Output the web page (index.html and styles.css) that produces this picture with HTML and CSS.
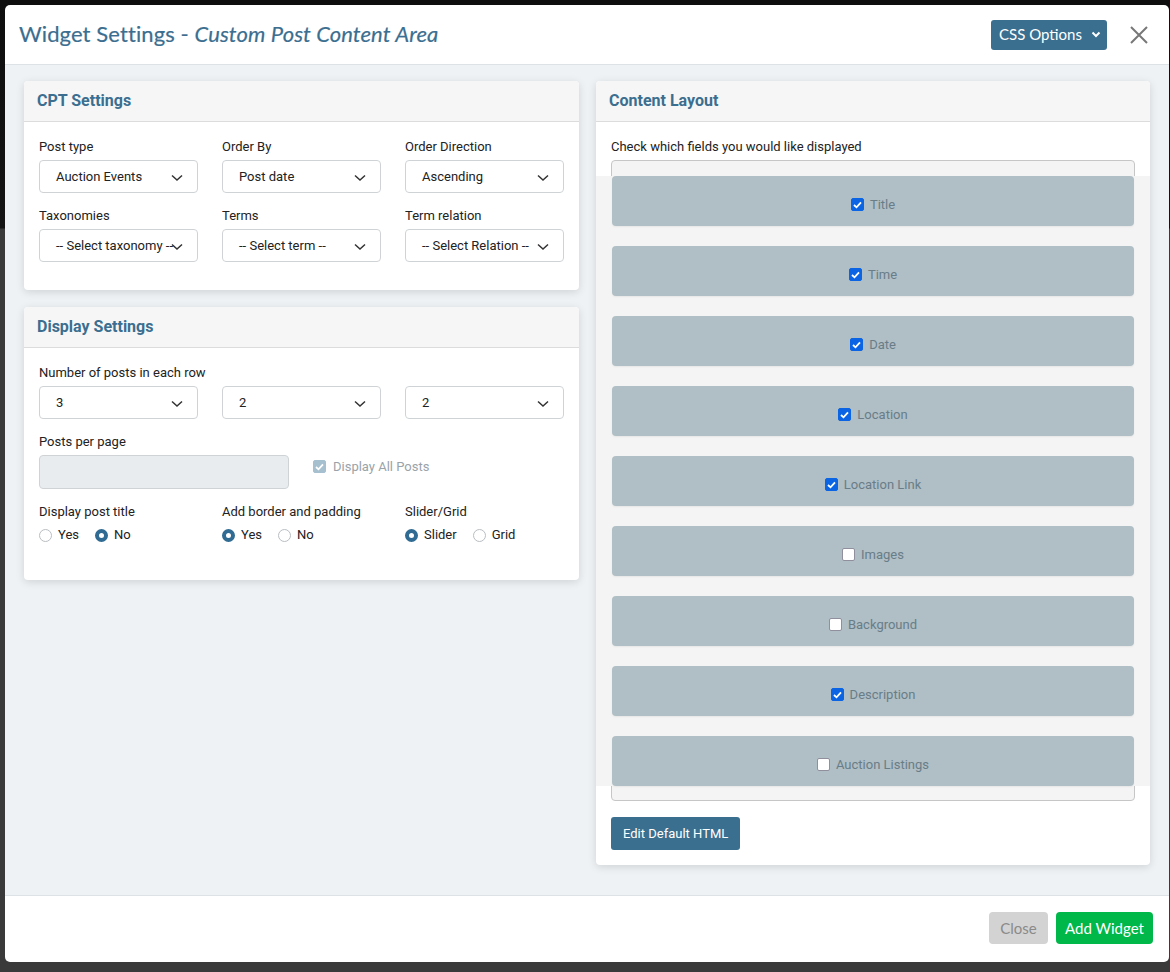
FILE: index.html
```html
<!DOCTYPE html>
<html lang="en">
<head>
<meta charset="utf-8">
<title>Widget Settings</title>
<link rel="stylesheet" href="styles.css">
</head>
<body>
<div class="modal">
  <header class="modal-header">
    <h1 class="modal-title">Widget Settings - <em>Custom Post Content Area</em></h1>
    <div class="header-actions">
      <button class="btn-css">CSS Options
        <svg class="caret" width="10" height="7" viewBox="0 0 10 7"><path d="M1.5 1.5 L5 5 L8.5 1.5" fill="none" stroke="#fff" stroke-width="2"/></svg>
      </button>
      <button class="btn-x" aria-label="Close">
        <svg width="20" height="20" viewBox="0 0 20 20"><path d="M2 2 L18 18 M18 2 L2 18" stroke="#777" stroke-width="2"/></svg>
      </button>
    </div>
  </header>

  <main class="modal-body">
    <div class="col">
      <section class="card">
        <div class="card-head">CPT Settings</div>
        <div class="card-body cpt-body">
          <div class="grid3">
            <div class="field"><label>Post type</label><div class="select"><span>Auction Events</span><svg class="chev" width="12" height="8" viewBox="0 0 12 8"><path d="M1 1.5 L6 6 L11 1.5" fill="none" stroke="#333" stroke-width="1.5"/></svg></div></div>
            <div class="field"><label>Order By</label><div class="select"><span>Post date</span><svg class="chev" width="12" height="8" viewBox="0 0 12 8"><path d="M1 1.5 L6 6 L11 1.5" fill="none" stroke="#333" stroke-width="1.5"/></svg></div></div>
            <div class="field"><label>Order Direction</label><div class="select"><span>Ascending</span><svg class="chev" width="12" height="8" viewBox="0 0 12 8"><path d="M1 1.5 L6 6 L11 1.5" fill="none" stroke="#333" stroke-width="1.5"/></svg></div></div>
            <div class="field"><label>Taxonomies</label><div class="select"><span>-- Select taxonomy --</span><svg class="chev" width="12" height="8" viewBox="0 0 12 8"><path d="M1 1.5 L6 6 L11 1.5" fill="none" stroke="#333" stroke-width="1.5"/></svg></div></div>
            <div class="field"><label>Terms</label><div class="select"><span>-- Select term --</span><svg class="chev" width="12" height="8" viewBox="0 0 12 8"><path d="M1 1.5 L6 6 L11 1.5" fill="none" stroke="#333" stroke-width="1.5"/></svg></div></div>
            <div class="field"><label>Term relation</label><div class="select"><span>-- Select Relation --</span><svg class="chev" width="12" height="8" viewBox="0 0 12 8"><path d="M1 1.5 L6 6 L11 1.5" fill="none" stroke="#333" stroke-width="1.5"/></svg></div></div>
          </div>
        </div>
      </section>

      <section class="card">
        <div class="card-head">Display Settings</div>
        <div class="card-body display-body">
          <div class="field">
            <label>Number of posts in each row</label>
            <div class="grid3">
              <div class="select"><span>3</span><svg class="chev" width="12" height="8" viewBox="0 0 12 8"><path d="M1 1.5 L6 6 L11 1.5" fill="none" stroke="#333" stroke-width="1.5"/></svg></div>
              <div class="select"><span>2</span><svg class="chev" width="12" height="8" viewBox="0 0 12 8"><path d="M1 1.5 L6 6 L11 1.5" fill="none" stroke="#333" stroke-width="1.5"/></svg></div>
              <div class="select"><span>2</span><svg class="chev" width="12" height="8" viewBox="0 0 12 8"><path d="M1 1.5 L6 6 L11 1.5" fill="none" stroke="#333" stroke-width="1.5"/></svg></div>
            </div>
          </div>
          <div class="ppp-row">
            <div class="field ppp-field"><label>Posts per page</label><div class="input disabled"></div></div>
            <div class="all-posts">
              <span class="cbox cbox-disabled"><svg width="9" height="8" viewBox="0 0 9 8"><path d="M1 4 L3.5 6.3 L8 1.3" fill="none" stroke="#fff" stroke-width="1.8"/></svg></span>
              <span>Display All Posts</span>
            </div>
          </div>
          <div class="grid3 radios-row">
            <div class="field"><label>Display post title</label>
              <div class="radios"><span class="radio-opt"><span class="radio"></span>Yes</span><span class="radio-opt"><span class="radio on"></span>No</span></div>
            </div>
            <div class="field"><label>Add border and padding</label>
              <div class="radios"><span class="radio-opt"><span class="radio on"></span>Yes</span><span class="radio-opt"><span class="radio"></span>No</span></div>
            </div>
            <div class="field"><label>Slider/Grid</label>
              <div class="radios"><span class="radio-opt"><span class="radio on"></span>Slider</span><span class="radio-opt"><span class="radio"></span>Grid</span></div>
            </div>
          </div>
        </div>
      </section>
    </div>

    <div class="col">
      <section class="card layout-card">
        <div class="card-head">Content Layout</div>
        <div class="card-body layout-body">
          <label>Check which fields you would like displayed</label>
          <div class="fields-box">
            <ul class="field-list">
              <li class="item"><span class="cbox on"><svg width="9" height="8" viewBox="0 0 9 8"><path d="M1 4 L3.5 6.3 L8 1.3" fill="none" stroke="#fff" stroke-width="1.8"/></svg></span>Title</li>
              <li class="item"><span class="cbox on"><svg width="9" height="8" viewBox="0 0 9 8"><path d="M1 4 L3.5 6.3 L8 1.3" fill="none" stroke="#fff" stroke-width="1.8"/></svg></span>Time</li>
              <li class="item"><span class="cbox on"><svg width="9" height="8" viewBox="0 0 9 8"><path d="M1 4 L3.5 6.3 L8 1.3" fill="none" stroke="#fff" stroke-width="1.8"/></svg></span>Date</li>
              <li class="item"><span class="cbox on"><svg width="9" height="8" viewBox="0 0 9 8"><path d="M1 4 L3.5 6.3 L8 1.3" fill="none" stroke="#fff" stroke-width="1.8"/></svg></span>Location</li>
              <li class="item"><span class="cbox on"><svg width="9" height="8" viewBox="0 0 9 8"><path d="M1 4 L3.5 6.3 L8 1.3" fill="none" stroke="#fff" stroke-width="1.8"/></svg></span>Location Link</li>
              <li class="item"><span class="cbox"></span>Images</li>
              <li class="item"><span class="cbox"></span>Background</li>
              <li class="item"><span class="cbox on"><svg width="9" height="8" viewBox="0 0 9 8"><path d="M1 4 L3.5 6.3 L8 1.3" fill="none" stroke="#fff" stroke-width="1.8"/></svg></span>Description</li>
              <li class="item"><span class="cbox"></span>Auction Listings</li>
            </ul>
          </div>
          <button class="btn-primary">Edit Default HTML</button>
        </div>
      </section>
    </div>
  </main>

  <footer class="modal-footer">
    <button class="btn-close">Close</button>
    <button class="btn-add">Add Widget</button>
  </footer>
</div>
</body>
</html>
```

FILE: styles.css
```css
* { box-sizing: border-box; }
html, body { margin: 0; padding: 0; }
body {
  width: 1170px;
  height: 972px;
  background: linear-gradient(#0e0e0e 0, #141414 228px, #3a3a3a 229px, #3a3a3a 100%);
  font-family: Roboto, "Liberation Sans", sans-serif;
  color: #222;
  overflow: hidden;
}
button { font: inherit; cursor: pointer; }

.modal {
  margin: 5px 0 0 5px;
  width: 1164px;
  height: 957px;
  background: #fff;
  border-radius: 5px;
  display: flex;
  flex-direction: column;
  overflow: hidden;
}

.modal-header {
  height: 60px;
  flex: none;
  border-bottom: 1px solid #dde2e6;
  display: flex;
  align-items: center;
  justify-content: space-between;
  padding: 0 20px 0 14px;
}
.modal-title {
  margin: 0 0 2px;
  font-family: Lato, "Open Sans", sans-serif;
  font-weight: 400;
  font-size: 22px;
  color: #3b6e8f;
  letter-spacing: 0.1px;
  -webkit-text-stroke: 0.2px #3b6e8f;
}
.modal-title em { font-style: italic; }
.header-actions { display: flex; align-items: center; gap: 22px; }
.btn-css {
  height: 30px;
  width: 116px;
  border: 0;
  border-radius: 3px;
  background: #3a6f8f;
  color: #fff;
  font-family: Lato, "Open Sans", sans-serif;
  font-size: 15px;
  display: flex;
  align-items: center;
  justify-content: center;
  gap: 9px;
  padding: 0 0 1px 2px;
}
.btn-x {
  border: 0;
  background: none;
  padding: 0;
  width: 20px;
  height: 20px;
  display: flex;
}

.modal-body {
  flex: 1;
  background: #eef2f5;
  padding: 16px 19px;
  display: grid;
  grid-template-columns: 555px 554px;
  column-gap: 17px;
  align-items: start;
  border-bottom: 1px solid #dde2e6;
}
.col { display: flex; flex-direction: column; gap: 17px; }

.card {
  background: #fff;
  border-radius: 4px;
  box-shadow: 0 2px 8px rgba(0, 0, 0, 0.13);
  overflow: hidden;
}
.card-head {
  height: 41px;
  line-height: 40px;
  background: #f6f6f6;
  border-bottom: 1px solid #dcdcdc;
  padding: 0 13px;
  font-weight: 700;
  font-size: 16px;
  color: #3b6e8f;
}
.card-body { padding: 15px 15px; }
.cpt-body { padding-bottom: 28px; }
.display-body { padding-bottom: 35px; display: flex; flex-direction: column; gap: 13px; }

label {
  display: block;
  font-size: 13px;
  line-height: 20px;
  margin-bottom: 3px;
  color: #222;
}

.grid3 {
  display: grid;
  grid-template-columns: 159px 159px 159px;
  column-gap: 24px;
  row-gap: 13px;
}
.select {
  position: relative;
  height: 33px;
  border: 1px solid #cfd3d6;
  border-radius: 4px;
  background: #fff;
  display: flex;
  align-items: center;
  padding: 0 0 0 16px;
  font-size: 13px;
  color: #222;
  white-space: nowrap;
  overflow: hidden;
}
.chev { position: absolute; right: 14px; top: 13px; }

.ppp-row { display: flex; align-items: flex-start; gap: 24px; }
.ppp-field { width: 250px; }
.input {
  height: 34px;
  border: 1px solid #cfd3d6;
  border-radius: 4px;
}
.input.disabled { background: #e9ecef; }
.all-posts {
  margin-top: 27px;
  display: flex;
  align-items: center;
  gap: 7px;
  font-size: 13px;
  color: #9aa3a9;
}

.cbox {
  width: 13px;
  height: 13px;
  border-radius: 2px;
  background: #fff;
  border: 1px solid #8f8f9d;
  display: inline-flex;
  align-items: center;
  justify-content: center;
  flex: none;
}
.cbox.on { background: #0b64e4; border-color: #0b64e4; }
.cbox-disabled { background: #a6c0d0; border-color: #a6c0d0; }

.radios-row { row-gap: 0; }
.radios { display: flex; gap: 16px; font-size: 13px; line-height: 20px; }
.radio-opt { display: inline-flex; align-items: center; gap: 6px; }
.radio {
  width: 13px;
  height: 13px;
  border-radius: 50%;
  border: 1px solid #b9bec2;
  background: #fff;
  flex: none;
}
.radio.on { border: 4px solid #2f6b93; }

.layout-body { padding: 15px 15px 15px; }
.fields-box {
  border: 1px solid #c6c6c6;
  border-radius: 4px;
  background: #f4f4f4;
  padding: 15px 0 14px;
  margin-bottom: 16px;
}
.field-list {
  list-style: none;
  margin: 0 -16px;
  padding: 0 16px;
  background: #f4f4f4;
  display: flex;
  flex-direction: column;
  gap: 20px;
}
.item {
  height: 50px;
  background: #b0bec5;
  border-radius: 4px;
  box-shadow: 0 1px 2px rgba(0, 0, 0, 0.06);
  display: flex;
  align-items: flex-start;
  justify-content: center;
  gap: 6px;
  padding-top: 21px;
  font-size: 13px;
  line-height: 15px;
  color: #687d88;
}
.item .cbox { margin-top: 1px; }

.btn-primary {
  height: 33px;
  border: 0;
  border-radius: 3px;
  background: #3a6f8f;
  color: #fff;
  font-size: 13px;
  padding: 0 12px;
}

.modal-footer {
  height: 66px;
  flex: none;
  display: flex;
  align-items: flex-start;
  justify-content: flex-end;
  gap: 8px;
  padding: 16px 16px 0;
}
.btn-close, .btn-add {
  height: 32px;
  border: 0;
  border-radius: 4px;
  font-family: Lato, "Open Sans", sans-serif;
  font-size: 15px;
}
.btn-close { width: 59px; background: #d3d3d3; color: #8a8a8a; }
.btn-add { width: 97px; background: #00b74a; color: #fff; }
```
